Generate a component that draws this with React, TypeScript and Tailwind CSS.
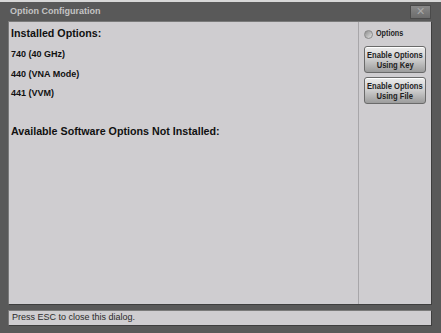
import React from 'react';

function SideButton({ top, bottom }: { top: string; bottom: string }) {
  return (
    <button className="w-[62px] h-[27px] p-0 rounded-[3px] border border-[#6a6a6a] bg-gradient-to-b from-[#ececec] via-[#cdcdcd] to-[#9c9c9c] shadow-[inset_0_1px_0_#ffffff] flex flex-col items-center justify-center leading-[10px] text-[9.5px] font-bold text-[#1e1e1e] whitespace-nowrap">
      <span className="inline-block scale-x-[0.8]">{top}</span>
      <span className="inline-block scale-x-[0.8]">{bottom}</span>
    </button>
  );
}

export default function App() {
  return (
    <div className="w-[441px] h-[333px] bg-[#595959] border-t-2 border-[#d8d8d8] flex flex-col font-['Liberation_Sans',Arial,sans-serif]">
      {/* Title bar */}
      <div className="h-[19px] flex items-center justify-between pl-[10px] pr-[10px]">
        <span className="text-[9px] font-bold text-[#c4c4c4]">Option Configuration</span>
        <div className="w-[21px] h-[14px] bg-gradient-to-b from-[#888888] to-[#6c6c6c] border border-[#4a4a4a] flex items-center justify-center text-[11px] leading-none text-[#a8a8a8]">
          ✕
        </div>
      </div>

      {/* Main panel */}
      <div className="ml-[8px] mr-[9px] h-[284px] bg-[#cfcdd0] border border-[#3e3e3e] border-l-[#7a7a7a] border-t-[#7a7a7a] flex">
        <div className="w-[350px] border-r border-[#a8a6a9] pl-[2px] pt-[3px] text-[#111]">
          <div className="text-[10.7px] font-bold h-[17px] leading-[17px]">Installed Options:</div>
          <div className="text-[9px] font-bold mt-[6px] h-[12px] leading-[12px]">740 (40 GHz)</div>
          <div className="text-[9px] font-bold mt-[8px] h-[12px] leading-[12px]">440 (VNA Mode)</div>
          <div className="text-[9px] font-bold mt-[7px] h-[12px] leading-[12px]">441 (VVM)</div>
          <div className="text-[10.7px] font-bold mt-[24px] h-[17px] leading-[17px]">Available Software Options Not Installed:</div>
        </div>
        <div className="flex-1 flex flex-col items-center pt-[6px]">
          <div className="flex items-center self-start ml-[5px] gap-[3px] h-[12px]">
            <span className="w-[9px] h-[9px] rounded-full bg-gradient-to-br from-[#8e8e8e] to-[#e2e2e2] border border-[#8a8a8a]" />
            <span className="inline-block origin-left scale-x-[0.8] text-[9px] font-bold text-[#222]">Options</span>
          </div>
          <div className="mt-[6px] flex flex-col gap-[4px]">
            <SideButton top="Enable Options" bottom="Using Key" />
            <SideButton top="Enable Options" bottom="Using File" />
          </div>
        </div>
      </div>

      {/* Status bar */}
      <div className="ml-[8px] mr-[9px] mt-[5px] h-[16px] bg-[#cfcdd0] border border-[#3e3e3e] border-l-[#7a7a7a] border-t-[#7a7a7a] flex items-center pl-[3px]">
        <span className="text-[9px] text-[#2a2a2a]">Press ESC to close this dialog.</span>
      </div>
    </div>
  );
}
